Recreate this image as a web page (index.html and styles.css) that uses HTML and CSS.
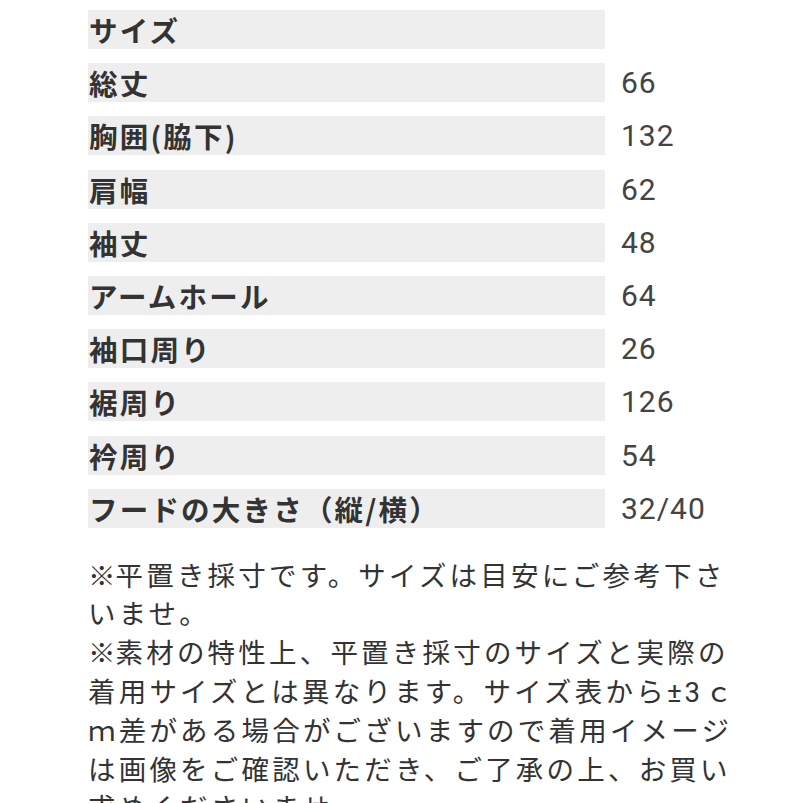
FILE: index.html
```html
<!DOCTYPE html>
<html lang="ja">
<head>
<meta charset="utf-8">
<link rel="stylesheet" href="styles.css">
</head>
<body>
<div class="page">
  <div class="table">
    <div class="label">サイズ</div><div class="value"></div>
    <div class="label">総丈</div><div class="value">66</div>
    <div class="label">胸囲(脇下)</div><div class="value">132</div>
    <div class="label">肩幅</div><div class="value">62</div>
    <div class="label">袖丈</div><div class="value">48</div>
    <div class="label">アームホール</div><div class="value">64</div>
    <div class="label">袖口周り</div><div class="value">26</div>
    <div class="label">裾周り</div><div class="value">126</div>
    <div class="label">衿周り</div><div class="value">54</div>
    <div class="label">フードの大きさ（縦/横）</div><div class="value">32/40</div>
  </div>
  <p class="note"><span class="mark">※</span>平置き採寸です。サイズは目安にご参考下さ<br>いませ。<br><span class="mark">※</span>素材の特性上、平置き採寸のサイズと実際の<br>着用サイズとは異なります。サイズ表から<span class="half">±3</span>ｃ<br>ｍ差がある場合がございますので着用イメージ<br>は画像をご確認いただき、ご了承の上、お買い<br>求めくださいませ。</p>
</div>
</body>
</html>
```
FILE: styles.css
```css
html, body {
  margin: 0;
  padding: 0;
  background: #ffffff;
}
.page {
  padding: 10px 0 0 88px;
  font-family: "Noto Sans CJK JP", "Noto Sans", sans-serif;
}
.table {
  display: grid;
  grid-template-columns: 517px auto;
  grid-auto-rows: 39px;
  column-gap: 16px;
  row-gap: 14.2px;
}
.label {
  background: #eeeeee;
  color: #333333;
  font-weight: 700;
  font-size: 28.5px;
  letter-spacing: 2.2px;
  line-height: 39px;
  padding-left: 1px;
  white-space: nowrap;
}
.value {
  font-family: Roboto, "Noto Sans", sans-serif;
  color: #444444;
  font-size: 30px;
  letter-spacing: 1px;
  line-height: 39px;
}
.note {
  margin: 27px 0 0 0;
  color: #333333;
  font-size: 27.5px;
  letter-spacing: 3.2px;
  line-height: 38.8px;
  white-space: nowrap;
}
.mark {
  letter-spacing: -6px;
  margin-right: 6px;
}
.half {
  font-family: Roboto, "Noto Sans", sans-serif;
  letter-spacing: 3px;
  margin-right: 2px;
  line-height: 0;
}
```
